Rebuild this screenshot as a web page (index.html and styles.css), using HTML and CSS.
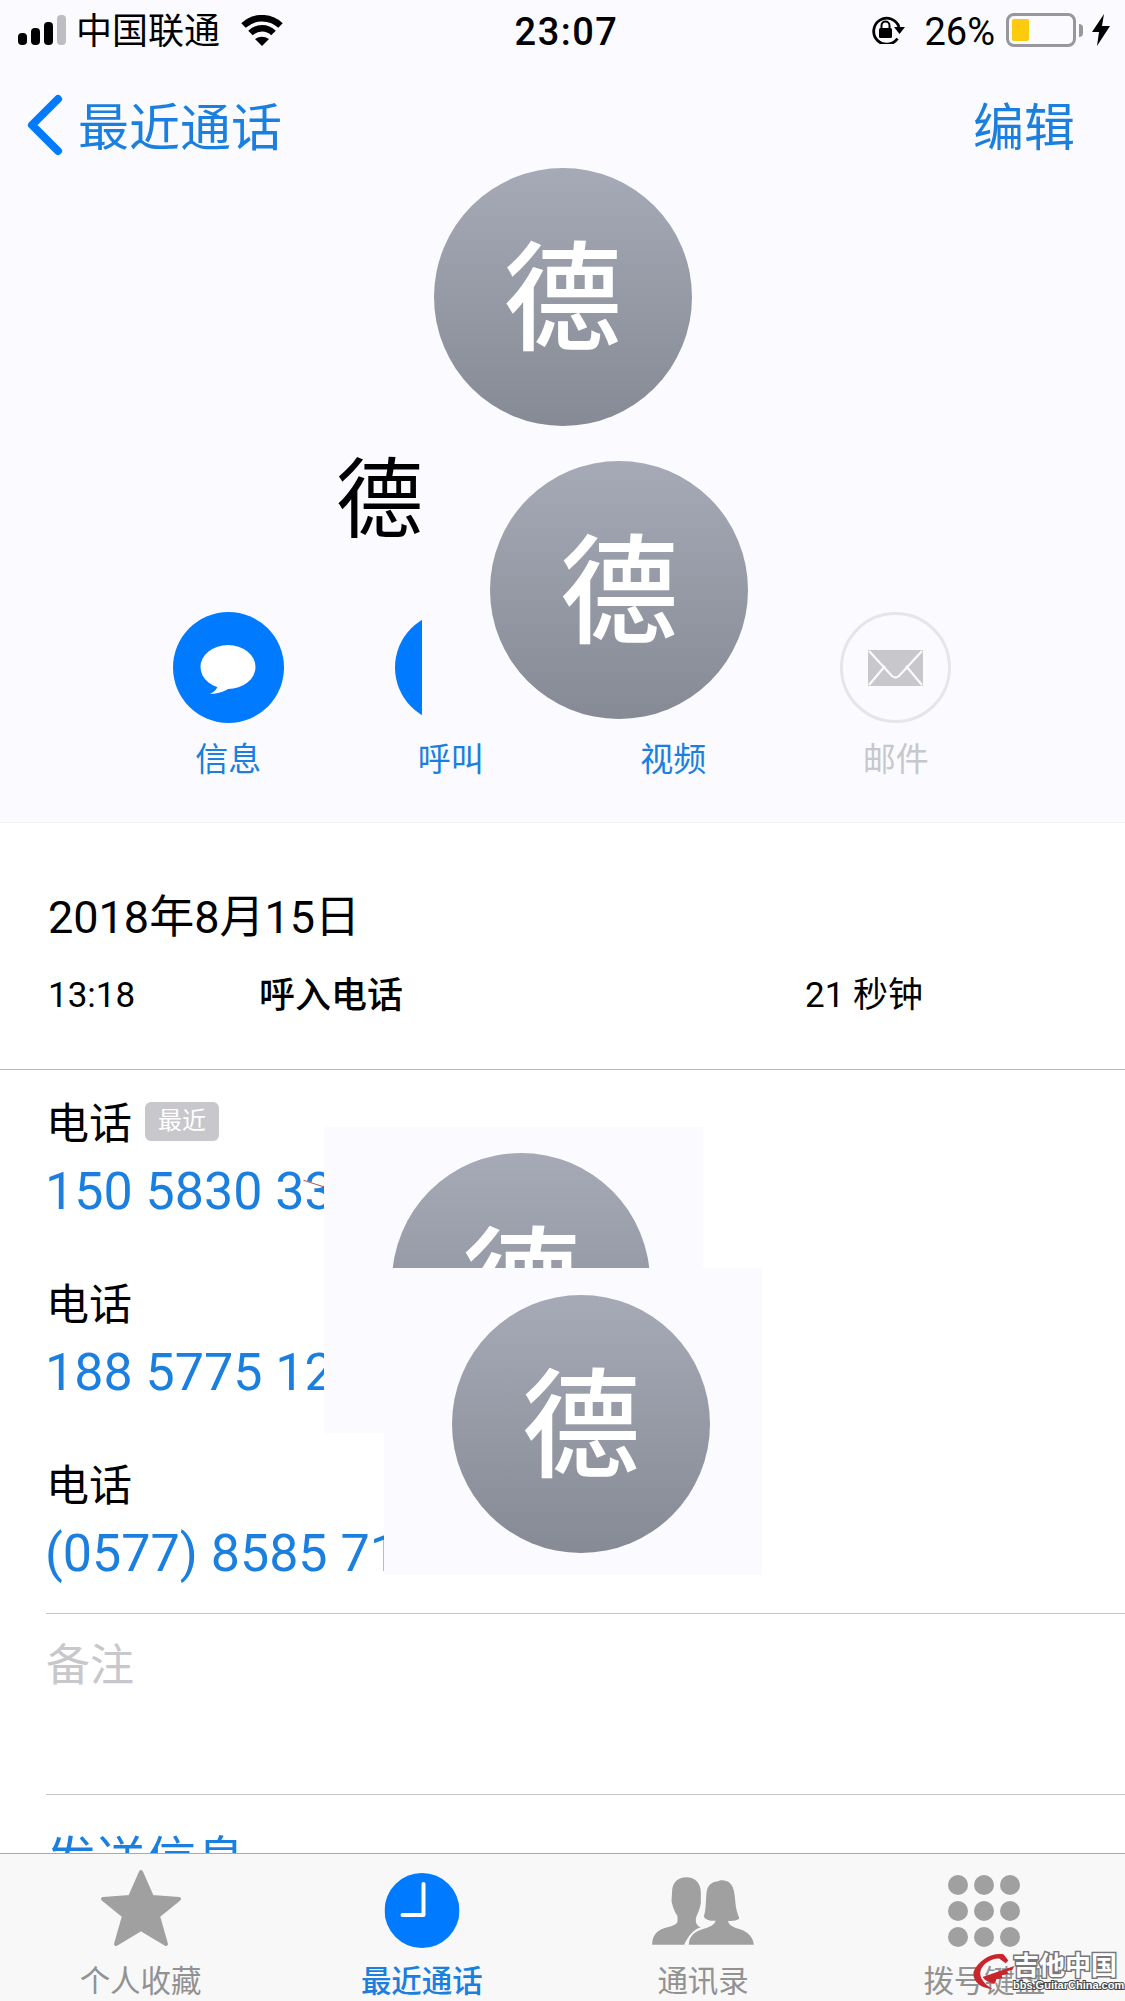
FILE: index.html
```html
<!DOCTYPE html>
<html lang="zh-CN">
<head>
    <meta charset="UTF-8">
    <meta name="viewport" content="width=device-width, initial-scale=1.0">
    <title>最近通话</title>
    <link rel="stylesheet" href="styles.css">
</head>
<body>
    <div class="phone">
        <main class="main">
            <section class="top">
                <div class="status">
                    <div class="status-left">
                        <div class="signal">
                            <span class="bar bar1"></span>
                            <span class="bar bar2"></span>
                            <span class="bar bar3"></span>
                            <span class="bar bar4"></span>
                        </div>
                        <span class="carrier">中国联通</span>
                        <svg class="wifi" viewBox="0 0 42 31">
                            <path d="M2.500 10.500A27 27 0 0 1 39.500 10.500" fill="none" stroke="#000" stroke-width="6.500"/>
                            <path d="M9.500 18A16.500 16.500 0 0 1 32.500 18" fill="none" stroke="#000" stroke-width="6.500"/>
                            <path d="M14 24Q21 19.500 28 24L21 31Z" fill="#000"/>
                        </svg>
                    </div>
                    <div class="clock-text">23:07</div>
                    <div class="status-right">
                        <svg class="rotate-lock" viewBox="0 0 34 28">
                            <path d="M26.500 22.500A13 13 0 1 1 28 11" fill="none" stroke="#000" stroke-width="2.800"/>
                            <path d="M23 11H34L28.500 18Z" fill="#000"/>
                            <rect x="8" y="12" width="13" height="10" rx="1.500" fill="#000"/>
                            <path d="M10.500 12V9.500A4 4 0 0 1 18.500 9.500V12" fill="none" stroke="#000" stroke-width="2"/>
                        </svg>
                        <span class="percent">26%</span>
                        <div class="battery"><span class="battery-fill"></span></div>
                        <span class="battery-nub"></span>
                        <svg class="bolt" viewBox="0 0 18 32">
                            <path d="M12 0L0 18H7L5 32L18 12H10Z" fill="#000"/>
                        </svg>
                    </div>
                </div>

                <nav class="nav">
                    <div class="back">
                        <svg class="chevron" viewBox="0 0 36 62">
                            <path d="M31 5L5 31L31 57" fill="none" stroke="#007aff" stroke-width="8" stroke-linecap="round" stroke-linejoin="round"/>
                        </svg>
                        <span>最近通话</span>
                    </div>
                    <span>编辑</span>
                </nav>

                <div class="avatar avatar-main">德</div>
                <div class="name">德</div>

                <div class="actions">
                    <div class="action">
                        <div class="action-icon">
                            <svg class="bubble" viewBox="0 0 56 50">
                                <ellipse cx="28" cy="22" rx="27.500" ry="22" fill="#fff"/>
                                <path d="M19 38Q17 46 10 49Q22 49 31 42Z" fill="#fff"/>
                            </svg>
                        </div>
                        <span class="action-label">信息</span>
                    </div>
                    <div class="action">
                        <div class="action-icon"></div>
                        <span class="action-label">呼叫</span>
                    </div>
                    <div class="action">
                        <div class="action-icon"></div>
                        <span class="action-label">视频</span>
                    </div>
                    <div class="action action-off">
                        <div class="action-icon">
                            <svg class="mail" viewBox="0 0 55 36">
                                <rect width="55" height="36" fill="#c7c7cc"/>
                                <path d="M1 1L24 26Q27.500 29 31 26L54 1M1 35L17 16M54 35L38 16" fill="none" stroke="#fbfbff" stroke-width="2.200"/>
                            </svg>
                        </div>
                        <span class="action-label">邮件</span>
                    </div>
                </div>
            </section>

            <section class="history">
                <div class="history-date">2018年8月15日</div>
                <div class="history-row">
                    <span>13:18</span>
                    <span class="history-type">呼入电话</span>
                    <span>21 秒钟</span>
                </div>
            </section>

            <section class="contact">
                <div class="contact-row">
                    <div class="contact-label">电话<span class="badge">最近</span></div>
                    <div class="contact-value">150 5830 33</div>
                </div>
                <div class="contact-row">
                    <div class="contact-label">电话</div>
                    <div class="contact-value">188 5775 12</div>
                </div>
                <div class="contact-row">
                    <div class="contact-label">电话</div>
                    <div class="contact-value">(0577) 8585 71</div>
                </div>
            </section>

            <section class="notes">
                <div class="notes-inner">备注</div>
            </section>

            <section class="send">
                <div class="send-inner">发送信息</div>
            </section>
        </main>

        <footer class="tabbar">
            <div class="tab">
                <svg class="tab-star" viewBox="0 0 82 78">
                    <path d="M41 3L52 28L79 30L58 47L66 75L41 60L16 75L24 47L3 30L30 28Z" fill="#a0a0a0" stroke="#a0a0a0" stroke-width="4" stroke-linejoin="round"/>
                </svg>
                <span class="tab-label">个人收藏</span>
            </div>
            <div class="tab tab-on">
                <svg class="tab-clock" viewBox="0 0 75 75">
                    <circle cx="37.500" cy="37.500" r="37.500" fill="#007aff"/>
                    <path d="M39 11V42H18" fill="none" stroke="#fff" stroke-width="4" stroke-linecap="round" stroke-linejoin="round"/>
                </svg>
                <span class="tab-label">最近通话</span>
            </div>
            <div class="tab">
                <svg class="tab-people" viewBox="97 47 305 204">
                    <path d="M97 250C97 225 110 207 135 200C155 195 172 190 173 180V165C160 145 158 130 155 120L157 85C160 60 178 48 200 48C225 48 243 65 243 95V125C240 145 232 160 228 170V182C230 190 235 195 243 198C220 205 205 225 193 250Z" fill="#a0a0a0"/>
                    <path d="M207 250C207 225 225 210 250 203C270 197 285 190 287 178C270 180 255 175 252 165C258 150 258 120 260 95C262 70 280 60 295 60C300 55 320 55 330 65C345 78 345 110 348 135C350 150 357 165 358 172C350 178 335 180 325 178C325 190 340 197 360 204C385 212 400 228 402 250Z" fill="#a0a0a0"/>
                </svg>
                <span class="tab-label">通讯录</span>
            </div>
            <div class="tab">
                <div class="keypad">
                    <span></span><span></span><span></span>
                    <span></span><span></span><span></span>
                    <span></span><span></span><span></span>
                </div>
                <span class="tab-label">拨号键盘</span>
            </div>
        </footer>

        <!-- pasted squares lying over the page -->
        <div class="patch patch-a"><div class="avatar">德</div></div>
        <div class="patch patch-b"><div class="avatar">德</div></div>
        <div class="patch patch-c"></div>
        <div class="patch patch-d"><div class="avatar">德</div></div>
        <span class="red-line"></span>

        <div class="watermark">
            <svg class="watermark-logo" viewBox="0 0 130 110">
                <path d="M95 3C60 -3 20 20 5 55C0 85 25 105 62 108C42 95 25 80 25 60C25 38 55 15 82 16L102 30L110 22Z" fill="#c9252c"/>
                <path d="M32 72L128 38L122 50L106 54L110 62L90 66L92 76L74 78L70 90C58 92 42 86 32 72Z" fill="#c9252c"/>
            </svg>
            <div class="watermark-text">
                <div class="watermark-title">吉他中国</div>
                <div class="watermark-url">bbs.GuitarChina.com</div>
            </div>
        </div>
    </div>
</body>
</html>
```

FILE: styles.css
```css
* {
    box-sizing: border-box;
}

body {
    margin: 0;
    background-color: #fff;
    color: #000;
    font-family: Roboto, "Noto Sans CJK SC", sans-serif;
}

.phone {
    position: relative;
    display: flex;
    flex-direction: column;
    width: 1125px;
    height: 2001px;
    overflow: hidden;
}

.main {
    flex: 1;
    min-height: 0;
    overflow: hidden;
}

.top {
    height: 823px;
    background-color: #fbfbff;
    border-bottom: 1px solid #f1f1f4;
}

/* status bar */
.status {
    display: grid;
    grid-template-columns: 1fr auto 1fr;
    align-items: center;
    height: 60px;
    padding: 0 15px 0 18px;
    font-size: 36px;
}

.status-left {
    display: flex;
    align-items: center;
}

.signal {
    display: flex;
    align-items: flex-end;
    gap: 4px;
    height: 30px;
}

.bar {
    width: 9px;
    border-radius: 4px;
    background-color: #000;
}

.bar1 {
    height: 12px;
}

.bar2 {
    height: 17px;
}

.bar3 {
    height: 23px;
}

.bar4 {
    height: 30px;
    background-color: #bdbdc2;
}

.carrier {
    margin-left: 10px;
    padding-top: 4px;
    line-height: 44px;
}

.wifi {
    width: 42px;
    height: 31px;
    margin-left: 21px;
}

.clock-text {
    padding: 4px 0 0 5px;
    font-weight: 500;
    font-size: 38px;
    letter-spacing: 1.500px;
}

.status-right {
    display: flex;
    align-items: center;
    justify-content: flex-end;
}

.rotate-lock {
    width: 34px;
    height: 28px;
}

.percent {
    margin-left: 19px;
    padding-top: 4px;
    font-size: 38px;
}

.battery {
    width: 70px;
    height: 34px;
    margin-left: 11px;
    padding: 3px;
    border: 3px solid #98989c;
    border-radius: 8px;
}

.battery-fill {
    display: block;
    width: 17px;
    height: 22px;
    background-color: #fccb0e;
    border-radius: 2px;
}

.battery-nub {
    width: 4px;
    height: 13px;
    margin-left: 3px;
    background-color: #98989c;
    border-radius: 0 4px 4px 0;
}

.bolt {
    width: 18px;
    height: 32px;
    margin-left: 9px;
}

/* nav bar */
.nav {
    display: flex;
    align-items: center;
    justify-content: space-between;
    height: 107px;
    padding: 23px 50px 2px 27px;
    color: #1a7fdf;
    font-size: 51px;
}

.back {
    display: flex;
    align-items: center;
    gap: 15px;
}

.chevron {
    width: 36px;
    height: 62px;
    margin-top: 2px;
}

/* contact head */
.avatar {
    display: flex;
    align-items: center;
    justify-content: center;
    width: 258px;
    height: 258px;
    padding-top: 8px;
    border-radius: 50%;
    background: linear-gradient(#a5aab6, #868a95);
    color: #fff;
    font-size: 118px;
    font-weight: 500;
    line-height: 1;
}

.avatar-main {
    margin: 1px auto 0;
}

.name {
    height: 100px;
    margin-top: 21px;
    padding: 4px 0 0 336px;
    font-size: 87px;
    line-height: 100px;
}

.actions {
    display: grid;
    grid-template-columns: repeat(4, 222.500px);
    margin-top: 65px;
    padding-left: 117px;
}

.action {
    display: flex;
    flex-direction: column;
    align-items: center;
    color: #1a7fdf;
}

.action-icon {
    display: flex;
    align-items: center;
    justify-content: center;
    width: 111px;
    height: 111px;
    border-radius: 50%;
    background-color: #007aff;
}

.action-label {
    margin-top: 19px;
    font-size: 33px;
    line-height: 36px;
}

.action-off {
    color: #c7c7cc;
}

.action-off .action-icon {
    background: none;
    border: 3px solid #e5e5ea;
}

.bubble {
    width: 56px;
    height: 50px;
    margin-top: 4px;
}

.mail {
    width: 55px;
    height: 36px;
}

/* call history */
.history {
    height: 247px;
    padding: 65px 0 0 48px;
    border-bottom: 1px solid #b9b9bc;
}

.history-date {
    font-size: 45px;
    line-height: 60px;
}

.history-row {
    display: grid;
    grid-template-columns: 211px 546px auto;
    margin-top: 26px;
    font-size: 35px;
    line-height: 44px;
}

.history-type {
    font-size: 36px;
    font-weight: 500;
}

/* phone numbers */
.contact {
    padding-left: 47px;
    height: 543px;
}

.contact-row {
    height: 181px;
    padding-top: 28px;
}

.contact-label {
    display: flex;
    align-items: center;
    margin-left: -1px;
    font-size: 43px;
    line-height: 52px;
}

.badge {
    width: 74px;
    height: 39px;
    margin: -5px 0 0 13px;
    border-radius: 6px;
    background-color: #c7c7cc;
    color: #fff;
    font-size: 24px;
    line-height: 39px;
    text-align: center;
}

.contact-value {
    margin: 12px 0 0 -2px;
    color: #1a7fdf;
    font-size: 52px;
    line-height: 60px;
}

.notes {
    height: 181px;
    padding-left: 46px;
}

.notes-inner {
    height: 100%;
    padding-top: 26px;
    border-top: 1px solid #c8c7cc;
    color: #c7c7cc;
    font-size: 44px;
    line-height: 52px;
}

.send {
    padding-left: 46px;
}

.send-inner {
    padding-top: 36px;
    border-top: 1px solid #c8c7cc;
    color: #1a7fdf;
    font-size: 50px;
    line-height: 60px;
}

/* tab bar */
.tabbar {
    display: flex;
    flex: none;
    height: 148px;
    background-color: #f8f8f8;
    border-top: 1px solid #aaa;
}

.tab {
    position: relative;
    flex: 1;
    color: #929292;
    text-align: center;
}

.tab svg,
.keypad {
    position: absolute;
    left: 50%;
    transform: translateX(-50%);
}

.tab-star {
    top: 15px;
    width: 82px;
    height: 78px;
}

.tab-clock {
    top: 19px;
    width: 75px;
    height: 75px;
}

.tab-people {
    top: 23px;
    width: 104px;
    height: 68px;
}

.keypad {
    display: grid;
    grid-template-columns: repeat(3, 20px);
    grid-auto-rows: 20px;
    gap: 6px;
    top: 21px;
}

.keypad span {
    border-radius: 50%;
    background-color: #a0a0a0;
}

.tab-label {
    display: block;
    padding-top: 110px;
    font-size: 30.500px;
    line-height: 36px;
}

.tab-on {
    color: #1a7fdf;
}

.tab-on .tab-label {
    font-weight: 500;
}

/* pasted squares */
.patch {
    position: absolute;
    background-color: #fbfbff;
}

.patch-a {
    left: 422px;
    top: 440px;
    width: 400px;
    height: 295px;
    padding: 21px 0 0 68px;
}

.patch-b {
    left: 324px;
    top: 1127px;
    width: 379px;
    height: 141px;
    padding: 26px 0 0 68px;
    overflow: hidden;
}

.patch-c {
    left: 324px;
    top: 1268px;
    width: 100px;
    height: 165px;
}

.patch-d {
    left: 384px;
    top: 1268px;
    width: 378px;
    height: 307px;
    padding: 27px 0 0 68px;
}

.red-line {
    position: absolute;
    left: 303px;
    top: 1183px;
    width: 21px;
    height: 1px;
    background-color: #b65a6c;
    transform: rotate(18deg);
}

/* watermark */
.watermark {
    position: absolute;
    left: 972px;
    top: 1953px;
    display: flex;
}

.watermark-logo {
    width: 43px;
    height: 37px;
}

.watermark-text {
    margin-left: -2px;
}

.watermark-title {
    color: #fff;
    font-size: 26px;
    font-weight: 700;
    line-height: 26px;
    -webkit-text-stroke: 3px #777;
    paint-order: stroke fill;
}

.watermark-url {
    margin-top: 1px;
    color: #fff;
    font-family: "Liberation Sans", sans-serif;
    font-size: 11px;
    font-weight: 700;
    line-height: 11px;
    white-space: nowrap;
    -webkit-text-stroke: 2px #444;
    paint-order: stroke fill;
}
```
